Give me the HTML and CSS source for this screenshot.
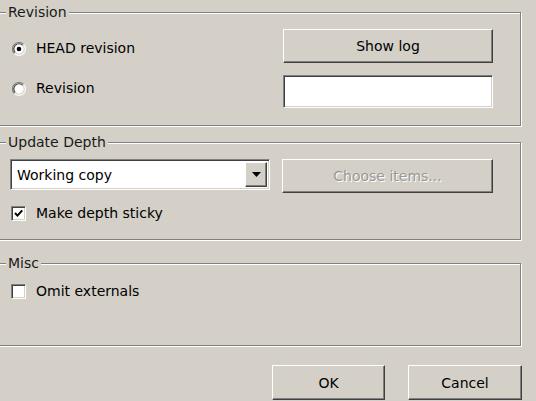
FILE: index.html
```html
<!DOCTYPE html>
<html>
<head>
<meta charset="utf-8">
<title>Update to revision</title>
<link rel="stylesheet" href="styles.css">
</head>
<body>
<div class="dialog">
  <fieldset class="group group-rev">
    <legend>Revision</legend>
    <div class="rev-grid">
      <label class="opt opt-head">
        <svg class="radio" width="14" height="14" viewBox="0 0 14 14">
          <circle cx="7" cy="7" r="6.5" fill="#fff"/>
          <path d="M2.4 11.6 A6.5 6.5 0 0 1 11.6 2.4" fill="none" stroke="#808080" stroke-width="1.2"/>
          <path d="M11.6 2.4 A6.5 6.5 0 0 1 2.4 11.6" fill="none" stroke="#f4f4f4" stroke-width="1.2"/>
          <path d="M3.3 10.7 A5.2 5.2 0 0 1 10.7 3.3" fill="none" stroke="#404040" stroke-width="1.2"/>
          <path d="M10.7 3.3 A5.2 5.2 0 0 1 3.3 10.7" fill="none" stroke="#d4d0c8" stroke-width="1.2"/>
          <circle cx="7" cy="7" r="2.3" fill="#000"/>
        </svg>
        <span>HEAD revision</span>
      </label>
      <button class="btn" type="button">Show log</button>
      <label class="opt opt-rev">
        <svg class="radio" width="14" height="14" viewBox="0 0 14 14">
          <circle cx="7" cy="7" r="6.5" fill="#fff"/>
          <path d="M2.4 11.6 A6.5 6.5 0 0 1 11.6 2.4" fill="none" stroke="#808080" stroke-width="1.2"/>
          <path d="M11.6 2.4 A6.5 6.5 0 0 1 2.4 11.6" fill="none" stroke="#f4f4f4" stroke-width="1.2"/>
          <path d="M3.3 10.7 A5.2 5.2 0 0 1 10.7 3.3" fill="none" stroke="#404040" stroke-width="1.2"/>
          <path d="M10.7 3.3 A5.2 5.2 0 0 1 3.3 10.7" fill="none" stroke="#d4d0c8" stroke-width="1.2"/>
        </svg>
        <span>Revision</span>
      </label>
      <div class="field"></div>
    </div>
  </fieldset>

  <fieldset class="group group-depth">
    <legend>Update Depth</legend>
    <div class="depth-grid">
      <div class="combo">
        <span class="combo-text">Working copy</span>
        <span class="combo-btn">
          <svg width="9" height="5" viewBox="0 0 9 5"><path d="M0 0 H9 L4.5 5 Z" fill="#000"/></svg>
        </span>
      </div>
      <button class="btn btn-disabled" type="button">Choose items...</button>
    </div>
    <label class="opt opt-check opt-sticky">
      <span class="check">
        <svg width="11" height="11" viewBox="0 0 11 11"><path d="M2 5 L4.5 7.6 L9.2 2.4" fill="none" stroke="#000" stroke-width="2"/></svg>
      </span>
      <span>Make depth sticky</span>
    </label>
  </fieldset>

  <fieldset class="group group-misc">
    <legend>Misc</legend>
    <label class="opt opt-check">
      <span class="check"></span>
      <span>Omit externals</span>
    </label>
  </fieldset>

  <div class="actions">
    <button class="btn btn-action" type="button">OK</button>
    <button class="btn btn-action btn-cancel" type="button">Cancel</button>
  </div>
</div>
</body>
</html>
```

FILE: styles.css
```css
* { box-sizing: border-box; }
html, body { margin: 0; padding: 0; }
body {
  background: #d4d0c8;
  font-family: "DejaVu Sans", Verdana, sans-serif;
  font-size: 14px;
  color: #000;
  width: 536px;
  height: 401px;
  overflow: hidden;
}
.dialog {
  padding-top: 4px;
  display: flex;
  flex-direction: column;
}
.group {
  margin: 0 15px 0 -3px;
  min-width: 0;
  border: 1px solid #808080;
  box-shadow: inset 1px 1px #fff, 1px 1px #fff;
  padding: 8px 27px 17px 12px;
}
.group legend {
  padding: 0 2px;
  margin-left: -4px;
  line-height: 17px;
  background: #d4d0c8;
  color: #1a1a1a;
}
.group-depth { margin-top: 8px; }
.group-misc { margin-top: 15px; padding-top: 11px; padding-bottom: 45px; }

.rev-grid {
  display: grid;
  grid-template-columns: 1fr 210px;
  grid-template-rows: 34px 33px;
  row-gap: 12px;
}
.depth-grid {
  display: grid;
  grid-template-columns: 260px 211px;
  column-gap: 12px;
  align-items: start;
}

.opt {
  display: flex;
  align-items: center;
  line-height: 17px;
  height: 17px;
}
.radio { margin-left: 2px; margin-right: 10px; flex: none; }
.opt-head { align-self: start; margin-top: 11px; }
.opt-rev { align-self: start; margin-top: 5px; }

.opt-check .check {
  flex: none;
  width: 15px;
  height: 15px;
  margin-left: 1px;
  margin-right: 10px;
  background: #fff;
  border: 1px solid;
  border-color: #808080 #fff #fff #808080;
  box-shadow: inset 1px 1px #404040, inset -1px -1px #d4d0c8;
  display: flex;
  align-items: center;
  justify-content: center;
}
.opt-sticky { margin-top: 12px; }

.btn {
  font: inherit;
  color: #000;
  background: #d4d0c8;
  border: 1px solid;
  border-color: #fff #404040 #404040 #fff;
  box-shadow: inset -1px -1px #808080;
  padding: 0;
  height: 34px;
}
.btn-disabled {
  color: #9a9893;
  text-shadow: 1px 1px #fff;
}
.field {
  background: #fff;
  border: 1px solid;
  border-color: #808080 #fff #fff #808080;
  box-shadow: inset 1px 1px #404040, inset -1px -1px #d4d0c8;
}
.combo {
  height: 31px;
  background: #fff;
  border: 1px solid;
  border-color: #808080 #fff #fff #808080;
  box-shadow: inset 1px 1px #404040, inset -1px -1px #d4d0c8;
  padding: 2px;
  display: flex;
  align-items: center;
}
.combo-text { flex: 1; padding-left: 4px; }
.combo-btn {
  width: 22px;
  height: 100%;
  background: #d4d0c8;
  border: 1px solid;
  border-color: #fff #404040 #404040 #fff;
  box-shadow: inset -1px -1px #808080;
  display: flex;
  align-items: center;
  justify-content: center;
}

.actions {
  display: flex;
  justify-content: flex-end;
  gap: 23px;
  padding-right: 14px;
  margin-top: 19px;
}
.btn-action { width: 113px; height: 35px; }
.btn-cancel { width: 114px; }
```
